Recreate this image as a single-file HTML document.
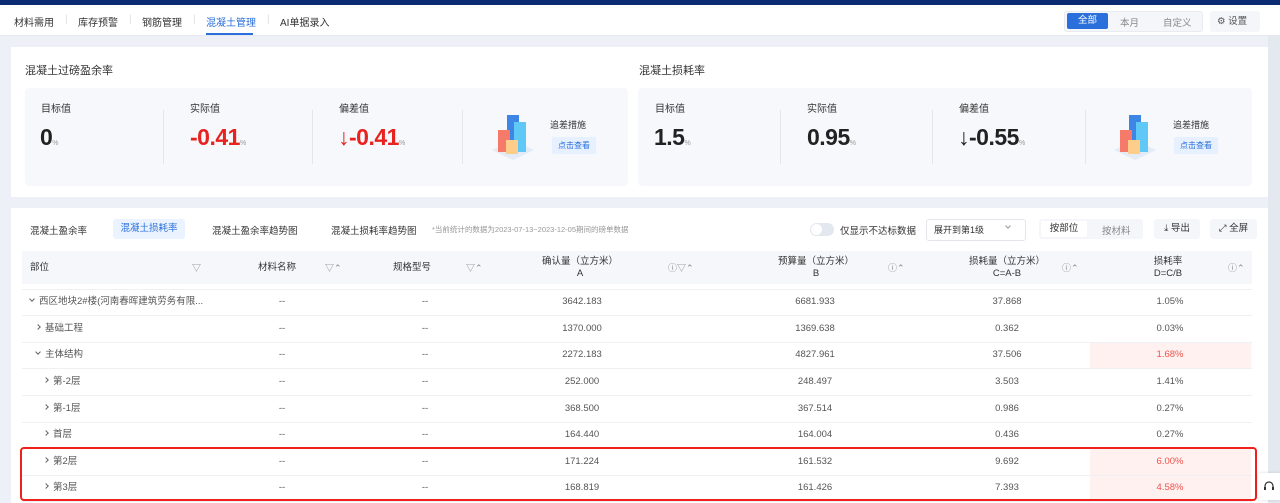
<!DOCTYPE html>
<html><head><meta charset="utf-8">
<style>
*{box-sizing:border-box;margin:0;padding:0}
body{width:1280px;height:503px;overflow:hidden;background:#edf1f7;font-family:"Liberation Sans","Noto Sans CJK SC",sans-serif;color:#333;position:relative;font-size:10px}
.a{position:absolute;white-space:nowrap}
.top{left:0;top:0;width:1280px;height:5px;background:#0c2a72}
.nav{left:0;top:5px;width:1280px;height:31px;background:#fff;border-bottom:1px solid #e6e9ef}
.card{background:#fff}
.panel{background:#f6f8fb;border-radius:4px}
.lbl{font-size:10px;color:#333}
.big{font-size:23px;font-weight:bold;letter-spacing:-0.5px}
.big small{font-size:7px;color:#999;font-weight:normal;letter-spacing:0}
.vl{width:1px;height:54px;background:#e3e6eb}
.btn{background:#e6f0ff;color:#2a6fdb;font-size:8px;padding:3px 6px;border-radius:2px}
.th{font-size:9.5px;color:#333;text-align:center;line-height:12px}
.ic{font-size:9px;color:#888}
.row{left:22px;width:1230px;height:26.6px;border-bottom:1px solid #eef0f3}
.c{font-size:9.5px;color:#555;text-align:center;position:absolute;top:7px;line-height:12px}
.c.l{text-align:left}
.r,.d{display:inline-block;width:4px;height:4px;border-right:1px solid #666;border-bottom:1px solid #666;margin-right:5px;vertical-align:middle}
.r{transform:rotate(-45deg);margin-top:-2px}
.d{transform:rotate(45deg);margin-top:-4px}
</style></head><body>
<div class="a top"></div>
<div class="a nav"></div>
<div class="a" style="left:14px;top:14px;font-size:10px">材料需用</div>
<div class="a" style="left:65px;top:14px;color:#ddd">|</div>
<div class="a" style="left:78px;top:14px;font-size:10px">库存预警</div>
<div class="a" style="left:129px;top:14px;color:#ddd">|</div>
<div class="a" style="left:142px;top:14px;font-size:10px">钢筋管理</div>
<div class="a" style="left:193px;top:14px;color:#ddd">|</div>
<div class="a" style="left:206px;top:14px;font-size:10px;color:#2a6fdb">混凝土管理</div>
<div class="a" style="left:206px;top:33px;width:47px;height:2px;background:#2a6fdb"></div>
<div class="a" style="left:267px;top:14px;color:#ddd">|</div>
<div class="a" style="left:280px;top:14px;font-size:10px">AI单据录入</div>
<div class="a" style="left:1064px;top:11px;width:139px;height:21px;background:#f4f6f9;border-radius:3px;border:1px solid #e8ebf0"></div>
<div class="a" style="left:1067px;top:13px;width:41px;height:16px;background:#2a6fdb;border-radius:2px;color:#fff;font-size:9.5px;text-align:center;line-height:16px">全部</div>
<div class="a" style="left:1120px;top:15px;color:#888;font-size:9.5px">本月</div>
<div class="a" style="left:1163px;top:15px;color:#888;font-size:9.5px">自定义</div>
<div class="a" style="left:1210px;top:11px;width:50px;height:21px;background:#f4f6f9;border-radius:3px;font-size:9.5px;line-height:21px;padding-left:7px;color:#555">⚙ 设置</div>
<div class="a" style="left:1268px;top:36px;width:12px;height:467px;background:#e4e8ef"></div>

<div class="a card" style="left:11px;top:47px;width:1257px;height:150px"></div>
<div class="a" style="left:25px;top:62px;font-size:11px">混凝土过磅盈余率</div>
<div class="a" style="left:639px;top:62px;font-size:11px">混凝土损耗率</div>
<div class="a panel" style="left:25px;top:88px;width:603px;height:98px"></div>
<div class="a panel" style="left:638px;top:88px;width:614px;height:98px"></div>

<div class="a lbl" style="left:41px;top:100px">目标值</div>
<div class="a big" style="left:40px;top:124px;color:#222">0<small>%</small></div>
<div class="a vl" style="left:163px;top:110px"></div>
<div class="a lbl" style="left:190px;top:100px">实际值</div>
<div class="a big" style="left:190px;top:124px;color:#e8221f">-0.41<small>%</small></div>
<div class="a vl" style="left:312px;top:110px"></div>
<div class="a lbl" style="left:339px;top:100px">偏差值</div>
<div class="a big" style="left:338px;top:124px;color:#e8221f">↓-0.41<small>%</small></div>
<div class="a vl" style="left:462px;top:110px"></div>

<div class="a lbl" style="left:655px;top:100px">目标值</div>
<div class="a big" style="left:654px;top:124px;color:#222">1.5<small>%</small></div>
<div class="a vl" style="left:780px;top:110px"></div>
<div class="a lbl" style="left:807px;top:100px">实际值</div>
<div class="a big" style="left:807px;top:124px;color:#222">0.95<small>%</small></div>
<div class="a vl" style="left:932px;top:110px"></div>
<div class="a lbl" style="left:959px;top:100px">偏差值</div>
<div class="a big" style="left:958px;top:124px;color:#222">↓-0.55<small>%</small></div>
<div class="a vl" style="left:1085px;top:110px"></div>

<svg class="a" style="left:490px;top:112px" width="46" height="50" viewBox="0 0 46 50">
<path d="M2 38 L23 48 L44 38 L23 28Z" fill="#e3ebf7"/>
<rect x="17" y="3" width="12" height="30" fill="#3d86e6"/>
<rect x="24" y="10" width="12" height="30" fill="#5fc8f7"/>
<rect x="8" y="18" width="12" height="22" fill="#f57a6a"/>
<rect x="16" y="28" width="12" height="14" fill="#ffcd8a"/>
</svg>
<div class="a" style="left:550px;top:118px;font-size:9px">追差措施</div>
<div class="a btn" style="left:552px;top:137px">点击查看</div>
<svg class="a" style="left:1112px;top:112px" width="46" height="50" viewBox="0 0 46 50">
<path d="M2 38 L23 48 L44 38 L23 28Z" fill="#e3ebf7"/>
<rect x="17" y="3" width="12" height="30" fill="#3d86e6"/>
<rect x="24" y="10" width="12" height="30" fill="#5fc8f7"/>
<rect x="8" y="18" width="12" height="22" fill="#f57a6a"/>
<rect x="16" y="28" width="12" height="14" fill="#ffcd8a"/>
</svg>
<div class="a" style="left:1173px;top:118px;font-size:9px">追差措施</div>
<div class="a btn" style="left:1174px;top:137px">点击查看</div>

<div class="a card" style="left:11px;top:208px;width:1257px;height:295px"></div>
<div class="a" style="left:30px;top:223px;font-size:9.5px">混凝土盈余率</div>
<div class="a" style="left:113px;top:219px;width:72px;height:20px;background:#eaf3ff;border-radius:3px;color:#2a6fdb;font-size:9.5px;text-align:center;line-height:20px">混凝土损耗率</div>
<div class="a" style="left:212px;top:223px;font-size:9.5px">混凝土盈余率趋势图</div>
<div class="a" style="left:331px;top:223px;font-size:9.5px">混凝土损耗率趋势图</div>
<div class="a" style="left:432px;top:224px;font-size:7.5px;color:#999">*当前统计的数据为2023-07-13~2023-12-05期间的磅单数据</div>
<div class="a" style="left:810px;top:223px;width:24px;height:13px;background:#e3e7ee;border-radius:7px"><div style="width:11px;height:11px;background:#fff;border-radius:50%;margin:1px"></div></div>
<div class="a" style="left:840px;top:223px;font-size:9.5px">仅显示不达标数据</div>
<div class="a" style="left:926px;top:219px;width:100px;height:22px;border:1px solid #e3e6eb;border-radius:3px;font-size:9px;line-height:20px;padding-left:7px">展开到第1级<span class="d" style="position:absolute;right:10px;top:8px;border-color:#999"></span></div>
<div class="a" style="left:1039px;top:219px;width:104px;height:20px;background:#f4f6f9;border-radius:3px"></div>
<div class="a" style="left:1041px;top:221px;width:46px;height:16px;background:#fff;border-radius:2px;font-size:9.5px;text-align:center;line-height:16px">按部位</div>
<div class="a" style="left:1102px;top:223px;font-size:9.5px;color:#888">按材料</div>
<div class="a" style="left:1154px;top:219px;width:46px;height:20px;background:#f4f6f9;border-radius:3px;font-size:9.5px;line-height:20px;text-align:center">⤓ 导出</div>
<div class="a" style="left:1210px;top:219px;width:47px;height:20px;background:#f4f6f9;border-radius:3px;font-size:9.5px;line-height:20px;text-align:center">⤢ 全屏</div>

<div class="a" style="left:22px;top:251px;width:1230px;height:33px;background:#f5f7fa"></div>
<div class="a" style="left:22px;top:289px;width:1230px;height:1px;background:#eef0f3"></div>
<div class="a th" style="left:30px;top:262px">部位</div><div class="a ic" style="left:192px;top:261px">▽</div>
<div class="a th" style="left:258px;top:262px">材料名称</div><div class="a ic" style="left:325px;top:261px">▽⌃</div>
<div class="a th" style="left:393px;top:262px">规格型号</div><div class="a ic" style="left:466px;top:261px">▽⌃</div>
<div class="a th" style="left:540px;top:256px;width:80px">确认量（立方米）<br>A</div><div class="a ic" style="left:668px;top:261px">ⓘ▽⌃</div>
<div class="a th" style="left:776px;top:256px;width:80px">预算量（立方米）<br>B</div><div class="a ic" style="left:888px;top:261px">ⓘ⌃</div>
<div class="a th" style="left:967px;top:256px;width:80px">损耗量（立方米）<br>C=A-B</div><div class="a ic" style="left:1062px;top:261px">ⓘ⌃</div>
<div class="a th" style="left:1128px;top:256px;width:80px">损耗率<br>D=C/B</div><div class="a ic" style="left:1228px;top:261px">ⓘ⌃</div>

<div class="a" style="left:1090px;top:342px;width:161px;height:26px;background:#fff1f0"></div>
<div class="a" style="left:1090px;top:449px;width:161px;height:52px;background:#fff1f0"></div>

<div class="a row" style="top:289px"><div class="c l" style="left:8px"><span class="d"></span>西区地块2#楼(河南春晖建筑劳务有限...</div><div class="c" style="left:240px;width:40px">--</div><div class="c" style="left:383px;width:40px">--</div><div class="c" style="left:520px;width:80px">3642.183</div><div class="c" style="left:753px;width:80px">6681.933</div><div class="c" style="left:945px;width:80px">37.868</div><div class="c" style="left:1108px;width:80px">1.05%</div></div>
<div class="a row" style="top:316px"><div class="c l" style="left:14px"><span class="r"></span>基础工程</div><div class="c" style="left:240px;width:40px">--</div><div class="c" style="left:383px;width:40px">--</div><div class="c" style="left:520px;width:80px">1370.000</div><div class="c" style="left:753px;width:80px">1369.638</div><div class="c" style="left:945px;width:80px">0.362</div><div class="c" style="left:1108px;width:80px">0.03%</div></div>
<div class="a row" style="top:342px"><div class="c l" style="left:14px"><span class="d"></span>主体结构</div><div class="c" style="left:240px;width:40px">--</div><div class="c" style="left:383px;width:40px">--</div><div class="c" style="left:520px;width:80px">2272.183</div><div class="c" style="left:753px;width:80px">4827.961</div><div class="c" style="left:945px;width:80px">37.506</div><div class="c" style="left:1108px;width:80px;color:#f0524a">1.68%</div></div>
<div class="a row" style="top:369px"><div class="c l" style="left:22px"><span class="r"></span>第-2层</div><div class="c" style="left:240px;width:40px">--</div><div class="c" style="left:383px;width:40px">--</div><div class="c" style="left:520px;width:80px">252.000</div><div class="c" style="left:753px;width:80px">248.497</div><div class="c" style="left:945px;width:80px">3.503</div><div class="c" style="left:1108px;width:80px">1.41%</div></div>
<div class="a row" style="top:396px"><div class="c l" style="left:22px"><span class="r"></span>第-1层</div><div class="c" style="left:240px;width:40px">--</div><div class="c" style="left:383px;width:40px">--</div><div class="c" style="left:520px;width:80px">368.500</div><div class="c" style="left:753px;width:80px">367.514</div><div class="c" style="left:945px;width:80px">0.986</div><div class="c" style="left:1108px;width:80px">0.27%</div></div>
<div class="a row" style="top:422px"><div class="c l" style="left:22px"><span class="r"></span>首层</div><div class="c" style="left:240px;width:40px">--</div><div class="c" style="left:383px;width:40px">--</div><div class="c" style="left:520px;width:80px">164.440</div><div class="c" style="left:753px;width:80px">164.004</div><div class="c" style="left:945px;width:80px">0.436</div><div class="c" style="left:1108px;width:80px">0.27%</div></div>
<div class="a row" style="top:449px"><div class="c l" style="left:22px"><span class="r"></span>第2层</div><div class="c" style="left:240px;width:40px">--</div><div class="c" style="left:383px;width:40px">--</div><div class="c" style="left:520px;width:80px">171.224</div><div class="c" style="left:753px;width:80px">161.532</div><div class="c" style="left:945px;width:80px">9.692</div><div class="c" style="left:1108px;width:80px;color:#f0524a">6.00%</div></div>
<div class="a row" style="top:475px"><div class="c l" style="left:22px"><span class="r"></span>第3层</div><div class="c" style="left:240px;width:40px">--</div><div class="c" style="left:383px;width:40px">--</div><div class="c" style="left:520px;width:80px">168.819</div><div class="c" style="left:753px;width:80px">161.426</div><div class="c" style="left:945px;width:80px">7.393</div><div class="c" style="left:1108px;width:80px;color:#f0524a">4.58%</div></div>

<div class="a" style="left:20px;top:447px;width:1237px;height:54px;border:2px solid #f0201c;border-radius:4px"></div>
<div class="a" style="left:1258px;top:473px;width:22px;height:27px;background:#fff;border-radius:3px 0 0 3px;box-shadow:0 0 3px rgba(0,0,0,.15)">
<svg width="22" height="27" viewBox="0 0 22 27"><path d="M7 16 V13 a4 4 0 0 1 8 0 V16" fill="none" stroke="#333" stroke-width="1.2"/><rect x="6" y="14" width="2" height="3" fill="#333"/><rect x="14" y="14" width="2" height="3" fill="#333"/></svg></div>
</body></html>
